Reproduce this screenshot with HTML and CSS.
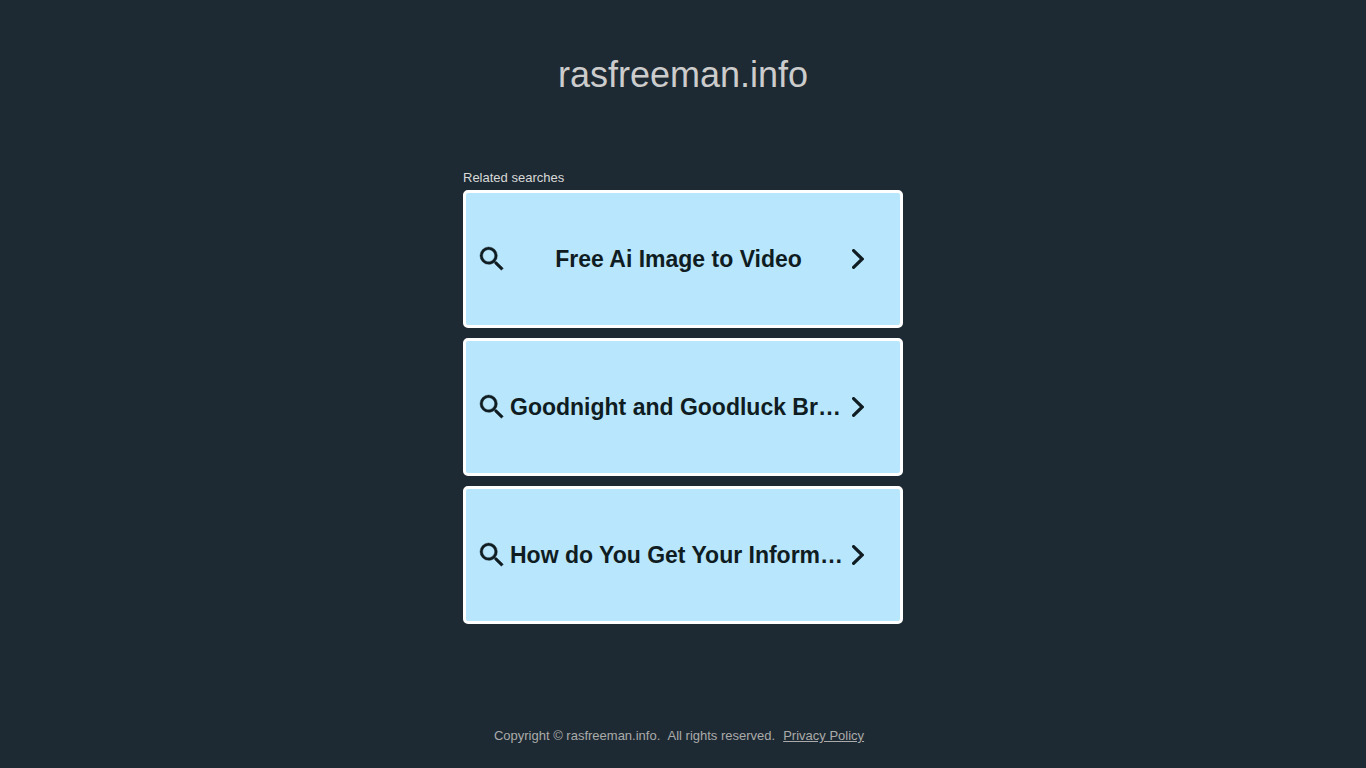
FILE: index.html
```html
<!DOCTYPE html>
<html lang="en">

<head>
    <meta charset="utf-8">
    <meta name="viewport" content="width=device-width, initial-scale=1">
    <title>rasfreeman.info</title>
    <link rel="stylesheet" href="styles.css">
</head>

<body>
    <svg class="sprite" aria-hidden="true">
        <symbol id="icon-search" viewBox="0 0 24 24">
            <path d="M15.5 14h-.79l-.28-.27A6.471 6.471 0 0 0 16 9.5 6.5 6.5 0 1 0 9.500 16c1.61 0 3.09-.59 4.23-1.57l.27.28v.79l5 4.99L20.49 19l-4.99-5zm-6 0C7.01 14 5 11.99 5 9.5S7.01 5 9.5 5 14 7.01 14 9.5 11.990 14 9.5 14z" />
        </symbol>
        <symbol id="icon-chevron" viewBox="0 0 12 20">
            <path d="M1.600 1.600L10.200 10l-8.600 8.400" fill="none" stroke="currentColor" stroke-width="3.2" stroke-linecap="round" />
        </symbol>
    </svg>

    <header class="header">
        <h1 class="domain">rasfreeman.info</h1>
    </header>

    <main class="searches">
        <h2 class="searches-title">Related searches</h2>
        <a class="search-card" href="#">
            <svg class="search-icon" aria-hidden="true"><use href="#icon-search" /></svg>
            <span class="search-text">Free Ai Image to Video</span>
            <svg class="chevron-icon" aria-hidden="true"><use href="#icon-chevron" /></svg>
        </a>
        <a class="search-card" href="#">
            <svg class="search-icon" aria-hidden="true"><use href="#icon-search" /></svg>
            <span class="search-text">Goodnight and Goodluck Broadway</span>
            <svg class="chevron-icon" aria-hidden="true"><use href="#icon-chevron" /></svg>
        </a>
        <a class="search-card" href="#">
            <svg class="search-icon" aria-hidden="true"><use href="#icon-search" /></svg>
            <span class="search-text">How do You Get Your Information</span>
            <svg class="chevron-icon" aria-hidden="true"><use href="#icon-chevron" /></svg>
        </a>
    </main>

    <footer class="footer">
        <span>Copyright © rasfreeman.info. &nbsp;All rights reserved.</span>
        <a class="privacy-link" href="#">Privacy Policy</a>
    </footer>
</body>

</html>
```

FILE: styles.css
```css
* {
    box-sizing: border-box;
}

body {
    margin: 0;
    min-height: 100vh;
    display: flex;
    flex-direction: column;
    font-family: "Liberation Sans", Arial, sans-serif;
    font-size: 13px;
    background-color: #1e2a33;
}

.sprite {
    position: absolute;
    width: 0;
    height: 0;
}

.header {
    padding: 55px 20px 75px;
    text-align: center;
}

.domain {
    margin: 0;
    font-size: 36px;
    font-weight: normal;
    line-height: 40px;
    color: #cccccc;
}

.searches {
    width: 100%;
    max-width: 440px;
    margin: 0 auto;
    display: flex;
    flex-direction: column;
}

.searches-title {
    margin: 0 0 4px;
    font-size: 13px;
    font-weight: normal;
    line-height: 16px;
    color: #d9d9d9;
}

.search-card {
    display: flex;
    align-items: center;
    min-height: 138px;
    padding: 0 36px 0 10px;
    border: 3px solid #ffffff;
    border-radius: 5px;
    background-color: #b8e6fc;
    color: #0f1c22;
    text-decoration: none;
}

.search-card + .search-card {
    margin-top: 10px;
}

.search-icon {
    flex: none;
    width: 32px;
    height: 32px;
    margin-right: 2px;
    fill: currentColor;
    stroke: currentColor;
    stroke-width: 0.3;
}

.search-text {
    flex: 1;
    min-width: 0;
    font-size: 23px;
    font-weight: bold;
    line-height: 28px;
    text-align: center;
    white-space: nowrap;
    overflow: hidden;
    text-overflow: ellipsis;
}

.chevron-icon {
    flex: none;
    width: 12px;
    height: 20px;
    margin-left: 5px;
}

.footer {
    margin-top: auto;
    padding: 0 28px 24px 20px;
    display: flex;
    flex-wrap: wrap;
    justify-content: center;
    gap: 8px;
    line-height: 16px;
    color: #aaaaaa;
}

.privacy-link {
    color: inherit;
}
```
